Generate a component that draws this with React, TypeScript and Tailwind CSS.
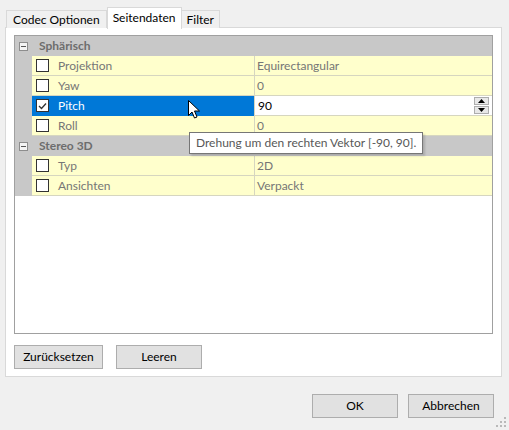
import React from 'react';

type Row =
    | { kind: 'group'; label: string }
    | { kind: 'prop'; label: string; value: string; checked?: boolean; selected?: boolean };

const rows: Row[] = [
    { kind: 'group', label: 'Sphärisch' },
    { kind: 'prop', label: 'Projektion', value: 'Equirectangular' },
    { kind: 'prop', label: 'Yaw', value: '0' },
    { kind: 'prop', label: 'Pitch', value: '90', checked: true, selected: true },
    { kind: 'prop', label: 'Roll', value: '0' },
    { kind: 'group', label: 'Stereo 3D' },
    { kind: 'prop', label: 'Typ', value: '2D' },
    { kind: 'prop', label: 'Ansichten', value: 'Verpackt' },
];

const Checkbox = ({ checked }: { checked?: boolean }) => (
    <div className="w-[13px] h-[13px] border border-[#333333] bg-white flex items-center justify-center">
        {checked && (
            <svg width="9" height="8" viewBox="0 0 9 8">
                <path d="M1 4 L3.5 6.5 L8 1.5" fill="none" stroke="#333333" strokeWidth="1.3" />
            </svg>
        )}
    </div>
);

const Spinner = () => (
    <div className="flex flex-col gap-[1px] mr-[3px]">
        <div className="w-[15px] h-[8px] bg-[#e8e8e8] border border-[#adadad] flex items-center justify-center">
            <svg width="7" height="4" viewBox="0 0 7 4"><path d="M3.5 0 L7 4 L0 4 Z" fill="#000" /></svg>
        </div>
        <div className="w-[15px] h-[8px] bg-[#e8e8e8] border border-[#adadad] flex items-center justify-center">
            <svg width="7" height="4" viewBox="0 0 7 4"><path d="M0 0 L7 0 L3.5 4 Z" fill="#000" /></svg>
        </div>
    </div>
);

const GridRow = ({ row }: { row: Row }) => {
    if (row.kind === 'group') {
        return (
            <div className="flex h-[20px] bg-[#c8c8c8] items-center">
                <div className="w-[17px] flex justify-center">
                    <div className="w-[9px] h-[9px] border border-[#8d8d8d] bg-[#f4f4f4] flex items-center justify-center">
                        <div className="w-[5px] h-[1px] bg-[#555555]" />
                    </div>
                </div>
                <span className="ml-[7px] font-bold text-[#6d6d6d]">{row.label}</span>
            </div>
        );
    }
    return (
        <div className="flex h-[20px] bg-[#c8c8c8]">
            <div className="w-[17px] shrink-0" />
            <div
                className={`w-[222px] flex items-center border-b ${row.selected ? 'bg-[#0078d7] border-[#0078d7] text-white' : 'bg-[#ffffcc] border-[#d6d6c0] text-[#767676]'}`}
            >
                <div className="ml-[4px]"><Checkbox checked={row.checked} /></div>
                <span className="ml-[9px]">{row.label}</span>
            </div>
            <div className="w-[1px] bg-[#d6d6c0]" />
            {row.selected ? (
                <div className="flex-1 flex items-center bg-white border-b border-[#d6d6c0]">
                    <span className="ml-[3px] text-black">{row.value}</span>
                    <div className="flex-1" />
                    <Spinner />
                </div>
            ) : (
                <div className="flex-1 flex items-center bg-[#ffffcc] border-b border-[#d6d6c0] text-[#767676]">
                    <span className="ml-[2px]">{row.value}</span>
                </div>
            )}
        </div>
    );
};

const Button = ({ label, className }: { label: string; className: string }) => (
    <div className={`h-[24px] bg-[#e1e1e1] border border-[#adadad] flex items-center justify-center text-black ${className}`}>
        {label}
    </div>
);

export default function App() {
    return (
        <div
            className="w-[509px] h-[430px] bg-[#f0f0f0] relative text-[12px] overflow-hidden"
            style={{ fontFamily: 'Lato, sans-serif' }}
        >
            {/* tabs */}
            <div className="flex items-end h-[28px] pl-[6px]">
                <div className="h-[18px] px-[6px] border border-b-0 border-[#d9d9d9] bg-[#f0f0f0] flex items-center">Codec Optionen</div>
                <div className="h-[22px] px-[5px] border border-b-0 border-[#d9d9d9] bg-white flex items-center -mb-[1px] relative z-10 pb-[2px]">Seitendaten</div>
                <div className="h-[18px] px-[5px] border border-l-0 border-b-0 border-[#d9d9d9] bg-[#f0f0f0] flex items-center">Filter</div>
            </div>
            {/* panel */}
            <div className="mx-[5px] w-[497px] h-[350px] -mt-[1px] border border-[#d9d9d9] bg-white px-[8px] pt-[7px]">
                <div className="h-[299px] border border-[#a0a0a0] bg-white">
                    {rows.map((r, i) => (
                        <GridRow key={i} row={r} />
                    ))}
                </div>
                <div className="flex gap-[13px] mt-[11px]">
                    <Button label="Zurücksetzen" className="w-[89px]" />
                    <Button label="Leeren" className="w-[86px]" />
                </div>
            </div>
            {/* dialog buttons */}
            <div className="flex justify-end gap-[10px] mt-[17px] pr-[15px]">
                <Button label="OK" className="w-[86px]" />
                <Button label="Abbrechen" className="w-[86px]" />
            </div>
            {/* size grip */}
            <svg className="absolute right-[2px] bottom-[2px]" width="12" height="12" viewBox="0 0 12 12">
                {[[9, 1], [5, 5], [9, 5], [1, 9], [5, 9], [9, 9]].map(([x, y], i) => (
                    <rect key={i} x={x} y={y} width="2" height="2" fill="#b9b9b9" />
                ))}
            </svg>
            {/* tooltip */}
            <div className="absolute left-[189px] top-[132px] h-[22px] px-[6px] bg-white border border-[#767676] flex items-center text-[#575757] shadow-[2px_2px_2px_rgba(0,0,0,0.15)]">
                Drehung um den rechten Vektor [-90, 90].
            </div>
            {/* cursor */}
            <svg className="absolute left-[188px] top-[100px]" width="14" height="20" viewBox="0 0 14 20">
                <path d="M0.5 0.5 L0.5 15.5 L4 12 L6.5 18 L9 17 L6.5 11 L11.5 11 Z" fill="white" stroke="black" strokeWidth="1" />
            </svg>
        </div>
    );
}
